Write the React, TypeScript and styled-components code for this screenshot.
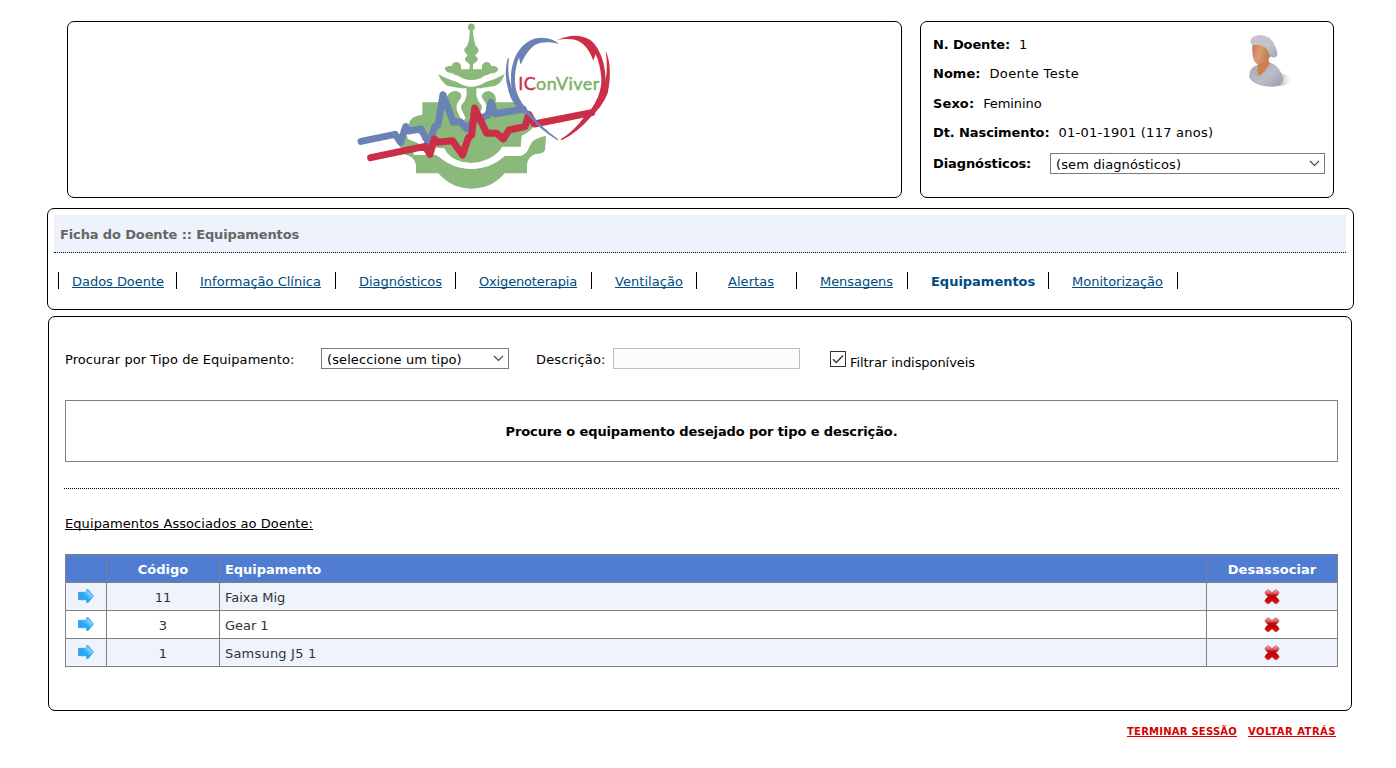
import React from 'react';
import styled, { createGlobalStyle } from 'styled-components';

const GlobalStyle = createGlobalStyle`
  *, *::before, *::after { box-sizing: border-box; }
  body {
    margin: 0;
    background: #fff;
    color: #000;
    font-family: Verdana, 'DejaVu Sans', sans-serif;
    font-size: 13px;
  }
`;

const Page = styled.div`
  width: 1396px;
  height: 768px;
  padding-top: 21px;
  overflow: hidden;
`;

const Panel = styled.section`
  border: 1px solid #000;
  border-radius: 7px;
  background: #fff;
`;

const Text = styled.span<{ $ls?: number; $bold?: boolean }>`
  white-space: nowrap;
  font-weight: ${p => (p.$bold ? 700 : 400)};
  letter-spacing: ${p => p.$ls ?? 0}px;
`;

/* Header */

const Header = styled.header`
  display: flex;
  gap: 18px;
  margin-left: 67px;
`;

const LogoPanel = styled(Panel)`
  display: flex;
  justify-content: center;
  width: 835px;
  height: 177px;
`;

const PatientPanel = styled(Panel)`
  width: 414px;
  height: 177px;
  padding: 8px 0 0 12px;
`;

const PatientTop = styled.div`
  display: flex;
  height: 119px;
`;

const PatientRows = styled.div`
  width: 315px;
`;

const PatientRow = styled.div<{ $height: number; $gap: number }>`
  display: flex;
  gap: ${p => p.$gap}px;
  height: ${p => p.$height}px;
  line-height: 29px;
`;

const AvatarSlot = styled.div`
  padding-top: 4px;
`;

const DiagnosisRow = styled.div`
  display: flex;
  line-height: 29px;
`;

const DiagnosisLabel = styled.div`
  width: 117px;
`;

const SelectBox = styled.div<{ $width: number }>`
  position: relative;
  width: ${p => p.$width}px;
  height: 21px;

  svg {
    position: absolute;
    right: 5px;
    top: 7px;
    pointer-events: none;
  }
`;

const Select = styled.select<{ $ls: number }>`
  appearance: none;
  display: block;
  width: 100%;
  height: 21px;
  margin: 0;
  padding: 2px 20px 0 5px;
  border: 1px solid #7a7a7a;
  border-radius: 0;
  background: #fff;
  color: #000;
  font: inherit;
  line-height: 18px;
  letter-spacing: ${p => p.$ls}px;
`;

const DiagnosisSelect = styled(SelectBox)`
  margin-top: 4px;
`;

/* Navigation */

const NavPanel = styled(Panel)`
  width: 1307px;
  height: 102px;
  margin: 10px 0 0 47px;
  padding: 6px 7px 0 6px;
`;

const TitleBar = styled.h1`
  height: 38px;
  margin: 0;
  padding-left: 6px;
  border-bottom: 1px dotted #000;
  background: #eef2fb;
  color: #666;
  font-size: 13px;
  line-height: 39px;
`;

const Tabs = styled.nav`
  display: flex;
  height: 17px;
  margin: 19px 0 0 4px;
  border-left: 1px solid #000;
  line-height: 19px;
`;

const Tab = styled.div<{ $width: number; $indent: number }>`
  width: ${p => p.$width}px;
  padding-left: ${p => p.$indent}px;
  border-right: 1px solid #000;
  color: #004b80;
  white-space: nowrap;
`;

const TabLink = styled.a<{ $ls: number }>`
  color: inherit;
  letter-spacing: ${p => p.$ls}px;
  text-decoration: underline;
  text-underline-offset: 1px;
  text-decoration-thickness: 1px;
  text-decoration-skip-ink: none;
`;

/* Content */

const Content = styled(Panel)`
  width: 1304px;
  height: 395px;
  margin: 6px 0 0 48px;
  padding: 31px 12px 0 15px;
`;

const SearchForm = styled.form`
  display: flex;
  height: 21px;
  padding-left: 1px;
  line-height: 23px;
`;

const TypeLabel = styled.label`
  width: 256px;
`;

const DescriptionLabel = styled.label`
  width: 77px;
  margin-left: 27px;
`;

const DescriptionInput = styled.input`
  width: 187px;
  height: 21px;
  margin: 0;
  border: 1px solid #bebebe;
  background: #fcfcfc;
`;

const FilterLabel = styled.label`
  display: flex;
  gap: 4px;
  margin: 3px 0 0 30px;
`;

const CheckboxBox = styled.span`
  position: relative;
  width: 16px;
  height: 16px;

  input {
    appearance: none;
    display: block;
    width: 16px;
    height: 16px;
    margin: 0;
    border: 1px solid #333;
    background: #fff;
  }

  svg {
    position: absolute;
    left: 0;
    top: 0;
    pointer-events: none;
  }
`;

const Notice = styled.div`
  width: 1273px;
  height: 62px;
  margin: 31px 0 0 1px;
  border: 1px solid #808080;
  line-height: 61px;
  text-align: center;
`;

const Divider = styled.hr`
  width: 1275px;
  height: 1px;
  margin: 26px 0 0;
  border: 0;
  border-top: 1px dotted #000;
`;

const SectionTitle = styled.div`
  height: 20px;
  margin: 25px 0 0 1px;
  line-height: 20px;
  text-decoration: underline;
  text-underline-offset: 1px;
  text-decoration-thickness: 1px;
  text-decoration-skip-ink: none;
`;

const Table = styled.div`
  display: grid;
  gap: 1px;
  width: 1273px;
  margin: 20px 0 0 1px;
  padding: 1px;
  background: #808080;
`;

const Row = styled.div<{ $tone: 'head' | 'odd' | 'even' }>`
  display: grid;
  grid-template-columns: 40px 112px 986px 130px;
  gap: 1px;
  height: 27px;
  line-height: 29px;
  color: ${p => (p.$tone === 'head' ? '#fff' : '#333')};

  > * {
    background: ${p => ({ head: '#507cd1', odd: '#eff3fb', even: '#fff' })[p.$tone]};
  }
`;

const Cell = styled.div`
  height: 27px;
  padding-left: 5px;
`;

const CenterCell = styled.div`
  height: 27px;
  text-align: center;
`;

const IconCell = styled.div`
  display: flex;
  justify-content: center;
  height: 27px;
  padding-top: 6px;
`;

/* Footer */

const Footer = styled.footer`
  display: flex;
  justify-content: flex-end;
  gap: 11px;
  padding: 13px 60px 0 0;
  line-height: 16px;
`;

const FooterLink = styled.a<{ $ls: number }>`
  color: #d80000;
  font-size: 10px;
  font-weight: 700;
  letter-spacing: ${p => p.$ls}px;
  text-decoration: underline;
  text-underline-offset: 1px;
  text-decoration-thickness: 1px;
`;

const Chevron = () => (
  <svg width="11" height="7" viewBox="0 0 11 7" fill="none" stroke="#444" strokeWidth="1.1">
    <path d="M1 1l4.5 4.5L10 1" />
  </svg>
);

const Logo = () => (
  <svg width="261" height="171" viewBox="27 21 783 513">
    <g fill="#8ab97b">
      <circle cx="379" cy="36" r="10.5" />
      <path d="M375 44L372 75L367 92Q352 103 361 113Q369 118 367 123Q355 130 363 139L374 148V166H384V148L396 139Q403 130 391 123Q390 118 398 113Q406 103 392 92L387 75L383 44Z" />
      <path d="M299 160Q302 152 321 152Q322 142 334 141Q345 142 348 152V163H411V152Q414 142 425 141Q436 142 438 152Q458 153 460 162Q457 175 438 175Q430 181 418 182Q410 189 400 192Q379 198 358 192Q347 188 340 182Q328 180 322 175Q301 174 299 160Z" />
      <path d="M279 177Q310 194 336 201Q379 230 422 201Q450 194 479 177Q470 205 450 213Q424 217 412 219Q399 222 396 228H363Q360 222 346 219Q330 217 306 212Q289 200 279 177Z" />
      <path d="M232 262H306Q302 234 327 228Q350 228 349 246L356 225H403L410 246Q412 228 432 228Q456 234 452 262H527V285L572 325Q560 350 530 362L527 395H472Q440 445 379 445Q318 442 298 400L232 395V362L198 340L190 330Q197 301 232 299Z" />
      <path d="M157 385L162 368L185 364Q196 374 208 376L232 395L250 404L280 423Q322 462 379 462Q436 462 480 423H528Q545 415 556 390Q560 372 603 362Q602 380 600 405Q596 417 572 417Q547 425 546 450V475H479Q440 521 379 521Q320 521 280 475H213V450Q210 425 182 419Z" />
    </g>
    <g fill="none" stroke="#fff">
      <path strokeWidth="14" d="M357 220Q362 246 347 262Q336 273 346 292L356 314" />
      <path strokeWidth="14" d="M402 220Q397 246 412 262Q423 273 413 292L403 314" />
      <path strokeWidth="12" d="M190 365Q205 377 250 384" />
      <path strokeWidth="12" d="M206 414L280 414" />
      <path strokeWidth="18" strokeLinejoin="round" d="M276 411Q330 453 379 453Q436 450 474 411H530Q545 408 545 370L590 352" />
    </g>
    <g fill="none" strokeWidth="21" strokeLinecap="round" strokeLinejoin="round">
      <path stroke="#6b82b5" d="M48 379L150 358L167 382L182 335L190 348L228 342L253 388L269 335L279 330L294 239L325 322L345 320L365 341L385 318L430 300L438 262L450 296L535 283" />
      <path stroke="#cb2f48" d="M77 428L240 394L255 418L268 372L278 382L322 377L353 420L370 368L380 360L389 279L425 355L455 355L475 372L492 345L540 335L551 298L568 327L740 293" />
    </g>
    <path fill="#6b82b5" d="M643 87Q615 65 580 69C530 76 498 128 498 190C498 245 515 267 540 291Q588 348 640 377L638 371Q592 340 552 290C520 255 508 225 510 185Q512 150 522 128L527 149Q552 92 585 84Q615 78 643 87Z" />
    <path fill="#6b82b5" d="M488 130Q475 180 491 230Q500 270 545 302L532 272Q480 210 492 130Z" />
    <path fill="#cb2f48" d="M636 76Q690 50 735 74C765 96 782 150 782 195C780 245 768 275 738 305Q700 350 650 376L647 373Q685 350 718 306C755 270 771 225 769 190Q765 145 752 118L745 137Q722 76 680 73Q655 70 636 76Z" />
    <path fill="#cb2f48" d="M782 108Q804 155 788 235Q770 280 735 306L760 262Q795 190 782 108Z" />
    <g fontFamily="Lato, sans-serif" fontSize="54" strokeWidth="1.2">
      <text x="520" y="226" textLength="52" fill="#cb2f48" stroke="#cb2f48">IC</text>
      <text x="573" y="226" textLength="190" fill="#7ab068" stroke="#7ab068">onViver</text>
    </g>
  </svg>
);

const Avatar = () => (
  <svg width="45" height="54" viewBox="999 57 135 162">
    <defs>
      <linearGradient id="hat" x1="0" y1="0" x2="1" y2="1">
        <stop offset="0" stopColor="#c4c4cf" />
        <stop offset=".6" stopColor="#c3c3cd" />
        <stop offset="1" stopColor="#a3a3b3" />
      </linearGradient>
      <linearGradient id="robe" x1="0" y1="0" x2="1" y2="1">
        <stop offset="0" stopColor="#a3a3b1" />
        <stop offset=".55" stopColor="#bdbdc9" />
        <stop offset="1" stopColor="#9a9aaa" />
      </linearGradient>
      <linearGradient id="skin" x1="0" y1="0" x2="1" y2=".4">
        <stop offset="0" stopColor="#bf7a55" />
        <stop offset=".5" stopColor="#dc9b75" />
        <stop offset="1" stopColor="#c07a4c" />
      </linearGradient>
      <linearGradient id="shade" x1="0" y1="0" x2="1" y2="0">
        <stop offset="0" stopColor="#999" stopOpacity=".8" />
        <stop offset="1" stopColor="#ccc" stopOpacity="0" />
      </linearGradient>
    </defs>
    <path fill="url(#shade)" d="M1090 175Q1125 178 1130 195Q1125 210 1090 214Z" />
    <path fill="url(#robe)" d="M1003 188Q1001 158 1026 150L1032 183L1060 141Q1096 150 1105 192Q1104 213 1075 215Q1018 214 1003 188Z" />
    <path fill="#c8804f" d="M1029 140L1060 128L1063 147Q1050 172 1031 184Q1024 165 1029 140Z" />
    <path fill="url(#skin)" d="M1012 86Q1009 142 1030 148Q1050 150 1066 124L1062 84Z" />
    <path fill="url(#hat)" d="M1006 80Q1006 62 1036 60Q1070 63 1080 92Q1090 112 1085 124Q1075 132 1064 122Q1058 92 1032 89Q1015 89 1011 93Z" />
  </svg>
);

const ArrowIcon = () => (
  <svg width="16" height="14" viewBox="0 0 16 14">
    <defs>
      <linearGradient id="arrow" x1="0" y1="1" x2="1" y2="0">
        <stop offset="0" stopColor="#1aa8f5" />
        <stop offset=".45" stopColor="#22aaf8" />
        <stop offset=".7" stopColor="#7fd0fb" />
        <stop offset="1" stopColor="#2a8fe0" />
      </linearGradient>
    </defs>
    <path fill="url(#arrow)" stroke="#2f8fdc" strokeWidth=".7" d="M.5 3.3H8.7V.6H10.2L15.5 7L10.2 13.4H8.7V10.7H.5Z" />
  </svg>
);

const RemoveIcon = () => (
  <svg width="16" height="16" viewBox="0 0 16 16">
    <defs>
      <linearGradient id="cross" x1="0" y1="0" x2="0" y2="1">
        <stop offset="0" stopColor="#f0a0a4" />
        <stop offset=".25" stopColor="#dd5a60" />
        <stop offset=".38" stopColor="#b80a10" />
        <stop offset=".65" stopColor="#c00008" />
        <stop offset="1" stopColor="#f01018" />
      </linearGradient>
    </defs>
    <path fill="url(#cross)" stroke="#a83038" strokeWidth=".5" strokeLinejoin="round" d="M3.6 .8L5.4 1.2L8 3.6L10.6 1.2L12.4 .8L15 3.2L14.6 5L12 7.6L15 11L15 12.4L12.6 14.8L11 14.6L8 11.8L5 14.6L3.4 14.8L1 12.4L1 11L4 7.6L1.4 5L1 3.2Z" />
  </svg>
);

const patient = [
  { label: 'N. Doente:', ls: -0.138, value: '1', vls: 0, gap: 9, height: 29 },
  { label: 'Nome:', ls: 0.02, value: 'Doente Teste', vls: 0.38, gap: 9, height: 30 },
  { label: 'Sexo:', ls: 0.1, value: 'Feminino', vls: -0.1, gap: 9, height: 29 },
  { label: 'Dt. Nascimento:', ls: -0.1, value: '01-01-1901 (117 anos)', vls: 0.24, gap: 9, height: 31 },
];

const tabs = [
  { label: 'Dados Doente', width: 118, indent: 13, ls: -0.033 },
  { label: 'Informação Clínica', width: 159, indent: 23, ls: 0.01 },
  { label: 'Diagnósticos', width: 120, indent: 23, ls: -0.033 },
  { label: 'Oxigenoterapia', width: 136, indent: 23, ls: -0.158 },
  { label: 'Ventilação', width: 105, indent: 23, ls: 0.052 },
  { label: 'Alertas', width: 100, indent: 31, ls: 0.045 },
  { label: 'Mensagens', width: 111, indent: 23, ls: -0.052 },
  { label: 'Equipamentos', width: 141, indent: 23, ls: -0.02, active: true },
  { label: 'Monitorização', width: 129, indent: 23, ls: 0.008 },
];

const equipment = [
  { code: '11', name: 'Faixa Mig', ls: -0.05 },
  { code: '3', name: 'Gear 1', ls: -0.05 },
  { code: '1', name: 'Samsung J5 1', ls: 0.2 },
];

export default function App() {
  return (
    <Page>
      <GlobalStyle />
      <Header>
        <LogoPanel><Logo /></LogoPanel>
        <PatientPanel>
          <PatientTop>
            <PatientRows>
              {patient.map(p => (
                <PatientRow key={p.label} $height={p.height} $gap={p.gap}>
                  <Text $bold $ls={p.ls}>{p.label}</Text>
                  <Text $ls={p.vls}>{p.value}</Text>
                </PatientRow>
              ))}
            </PatientRows>
            <AvatarSlot><Avatar /></AvatarSlot>
          </PatientTop>
          <DiagnosisRow>
            <DiagnosisLabel><Text $bold $ls={-0.1}>Diagnósticos:</Text></DiagnosisLabel>
            <DiagnosisSelect $width={275}>
              <Select $ls={0.1}><option>(sem diagnósticos)</option></Select>
              <Chevron />
            </DiagnosisSelect>
          </DiagnosisRow>
        </PatientPanel>
      </Header>

      <NavPanel>
        <TitleBar><Text $bold $ls={-0.13}>Ficha do Doente :: Equipamentos</Text></TitleBar>
        <Tabs>
          {tabs.map(t => (
            <Tab key={t.label} $width={t.width} $indent={t.indent}>
              {t.active ? <Text $bold $ls={t.ls}>{t.label}</Text> : <TabLink $ls={t.ls}>{t.label}</TabLink>}
            </Tab>
          ))}
        </Tabs>
      </NavPanel>

      <Content>
        <SearchForm>
          <TypeLabel><Text $ls={0.065}>Procurar por Tipo de Equipamento:</Text></TypeLabel>
          <SelectBox $width={188}>
            <Select $ls={0.1}><option>(seleccione um tipo)</option></Select>
            <Chevron />
          </SelectBox>
          <DescriptionLabel><Text $ls={0.12}>Descrição:</Text></DescriptionLabel>
          <DescriptionInput disabled />
          <FilterLabel>
            <CheckboxBox>
              <input type="checkbox" defaultChecked />
              <svg width="16" height="16" viewBox="0 0 16 16" fill="none" stroke="#333" strokeWidth="1.4">
                <path d="M3 8.2L6.3 11.5L13 4.6" />
              </svg>
            </CheckboxBox>
            <Text $ls={-0.06}>Filtrar indisponíveis</Text>
          </FilterLabel>
        </SearchForm>

        <Notice><Text $bold $ls={-0.11}>Procure o equipamento desejado por tipo e descrição.</Text></Notice>
        <Divider />
        <SectionTitle><Text $ls={0.078}>Equipamentos Associados ao Doente:</Text></SectionTitle>

        <Table>
          <Row $tone="head">
            <CenterCell />
            <CenterCell><Text $bold>Código</Text></CenterCell>
            <Cell><Text $bold $ls={-0.05}>Equipamento</Text></Cell>
            <CenterCell><Text $bold $ls={0.05}>Desassociar</Text></CenterCell>
          </Row>
          {equipment.map((e, i) => (
            <Row key={e.code} $tone={i % 2 ? 'even' : 'odd'}>
              <IconCell><ArrowIcon /></IconCell>
              <CenterCell><Text>{e.code}</Text></CenterCell>
              <Cell><Text $ls={e.ls}>{e.name}</Text></Cell>
              <IconCell><RemoveIcon /></IconCell>
            </Row>
          ))}
        </Table>
      </Content>

      <Footer>
        <FooterLink $ls={0.23}>TERMINAR SESSÃO</FooterLink>
        <FooterLink $ls={0.484}>VOLTAR ATRÁS</FooterLink>
      </Footer>
    </Page>
  );
}
